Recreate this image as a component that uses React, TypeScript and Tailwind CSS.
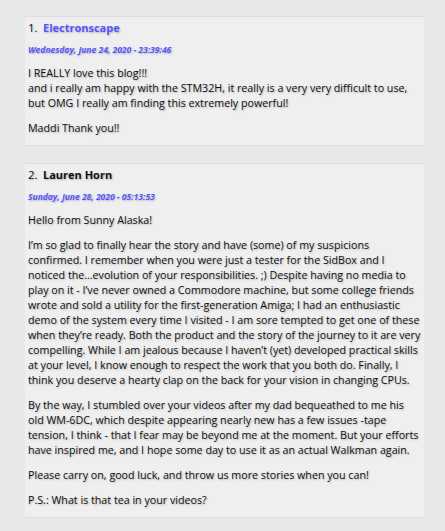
const comments = [
  {
    n: 1,
    name: 'Electronscape',
    link: true,
    date: 'Wednesday, June 24, 2020 - 23:39:46',
    paras: [
      [
        'I REALLY love this blog!!!',
        'and i really am happy with the STM32H, it really is a very very difficult to use, but OMG I really am finding this extremely powerful!',
      ],
      ['Maddi Thank you!!'],
    ],
  },
  {
    n: 2,
    name: 'Lauren Horn',
    link: false,
    date: 'Sunday, June 28, 2020 - 05:13:53',
    paras: [
      ['Hello from Sunny Alaska!'],
      [
        'I\u2019m so glad to finally hear the story and have (some) of my suspicions confirmed. I remember when you were just a tester for the SidBox and I noticed the\u2026evolution of your responsibilities. ;) Despite having no media to play on it - I\u2019ve never owned a Commodore machine, but some college friends wrote and sold a utility for the first-generation Amiga; I had an enthusiastic demo of the system every time I visited - I am sore tempted to get one of these when they\u2019re ready. Both the product and the story of the journey to it are very compelling. While I am jealous because I haven\u2019t (yet) developed practical skills at your level, I know enough to respect the work that you both do. Finally, I think you deserve a hearty clap on the back for your vision in changing CPUs.',
      ],
      [
        'By the way, I stumbled over your videos after my dad bequeathed to me his old WM-6DC, which despite appearing nearly new has a few issues -tape tension, I think - that I fear may be beyond me at the moment. But your efforts have inspired me, and I hope some day to use it as an actual Walkman again.',
      ],
      ['Please carry on, good luck, and throw us more stories when you can!'],
      ['P.S.: What is that tea in your videos?'],
    ],
  },
];

export default function App() {
  return (
    <div
      className="min-h-[531px] bg-[#e8e8e8] pt-4 pb-4 text-[#111] [text-shadow:1px_1px_2px_rgba(0,0,0,0.25)]"
      style={{ fontFamily: '"Open Sans", sans-serif' }}
    >
      <div className="ml-[25px] w-[399px] flex flex-col gap-[17px]">
        {comments.map((c) => (
          <div
            key={c.n}
            className="bg-[#efefef] border-y border-[#dedede] pl-[3px] pr-[2px] pt-[2px] pb-[9px]"
          >
            <div className="flex items-baseline text-[11px] leading-[18px]">
              <span className="w-[15px] text-[11.5px]">{c.n}.</span>
              <span className={'font-bold ' + (c.link ? 'text-[#5757ff]' : 'text-[#111]')}>
                {c.name}
              </span>
            </div>
            <div className="mt-[7px] text-[8.5px] leading-[12px] font-bold italic text-[#5757ff]">
              {c.date}
            </div>
            {c.paras.map((p, i) => (
              <p key={i} className="mt-[10px] text-[10.7px] leading-[15px]">
                {p.map((line, j) => (
                  <span key={j}>
                    {j > 0 && <br />}
                    {line}
                  </span>
                ))}
              </p>
            ))}
          </div>
        ))}
      </div>
    </div>
  );
}
